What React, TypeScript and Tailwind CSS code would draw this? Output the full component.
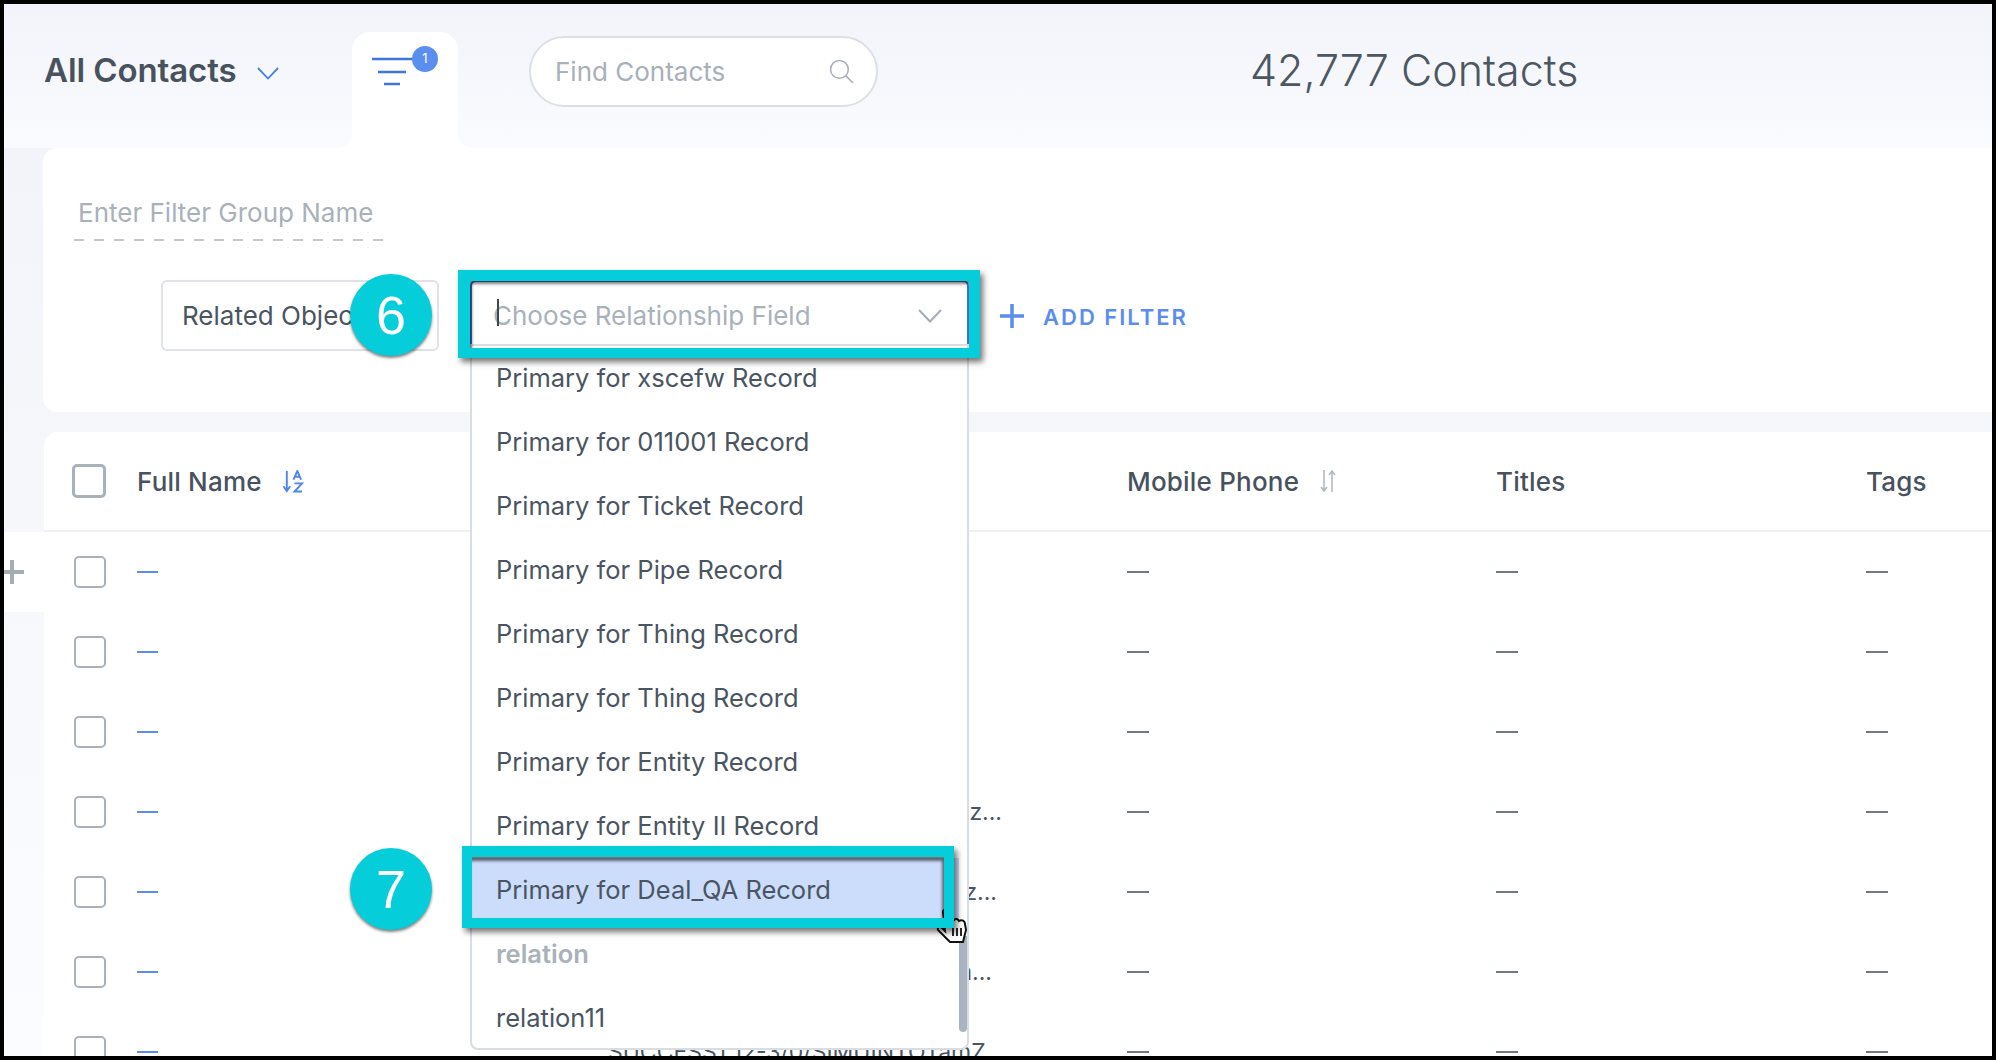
const font = "font-['Inter','Liberation_Sans',sans-serif]";

const menuItems = [
  "Primary for xscefw Record",
  "Primary for 011001 Record",
  "Primary for Ticket Record",
  "Primary for Pipe Record",
  "Primary for Thing Record",
  "Primary for Thing Record",
  "Primary for Entity Record",
  "Primary for Entity II Record",
  "Primary for Deal_QA Record",
];

const rows = [
  { text: "", cls: "" },
  { text: "", cls: "" },
  { text: "", cls: "" },
  { text: "z...", cls: "text-right pr-[125px]" },
  { text: "z...", cls: "text-right pr-[130px]" },
  { text: "n...", cls: "text-right pr-[135px]" },
  { text: "SUCCESS1 12-3/0/SIMUINTOTamZ", cls: "pl-[3px]" },
];

const columns = "grid grid-cols-[65px_468px_522px_369px_370px_1fr] items-center pl-[28px]";

const Chevron = ({ className }: { className: string }) => (
  <svg viewBox="0 0 24 14" fill="none" stroke="currentColor" strokeWidth="2" className={className}>
    <path d="M1 1l11 11.5L23 1" />
  </svg>
);

const Check = ({ header }: { header?: boolean }) => (
  <div
    className={
      header
        ? "w-[34px] h-[34px] rounded-[5px] border-[3px] border-[#a9b1bb] bg-white"
        : "w-[32px] h-[32px] ml-[2px] rounded-[5px] border-2 border-[#a9b1bb] bg-white"
    }
  />
);

const Row = ({ text, cls, first }: { text: string; cls: string; first: boolean }) => (
  <div className={`flex h-[80px] shrink-0 items-center ${first ? "bg-white" : ""}`}>
    <div className="w-[40px] h-full flex items-center text-[#a4acb6]">
      {first && (
        <svg viewBox="0 0 20 24" className="w-[20px] h-[24px]">
          <path d="M0 12h20M8 0v24" stroke="currentColor" strokeWidth="4" />
        </svg>
      )}
    </div>
    <div className={`flex-1 h-full bg-white ${columns}`}>
      <Check />
      <div className="w-[21px] h-[2px] bg-[#5b8def]" />
      <div className={`whitespace-nowrap text-[23px] text-[#4a5562] ${cls}`}>{text}</div>
      <div className="w-[22px] h-[2px] bg-[#6f7883]" />
      <div className="w-[22px] h-[2px] bg-[#6f7883]" />
      <div className="w-[22px] h-[2px] bg-[#6f7883]" />
    </div>
  </div>
);

const App = () => {
  return (
    <div
      className={`${font} relative w-[1996px] h-[1060px] overflow-hidden border-4 border-black bg-gradient-to-b from-[#f1f3f8] to-[#fbfcff]`}
    >
      <div className="flex h-[144px] bg-white">
        <div className="w-[348px] h-full pt-[31px] rounded-br-[14px] bg-gradient-to-b from-[#f2f4f9] to-[#fafbff]">
          <div className="flex items-center pl-[40px] h-[72px]">
            <span className="text-[33px] font-semibold text-[#48525f] tracking-[-0.1px]">All Contacts</span>
            <Chevron className="w-[22px] h-[13px] ml-[21px] mt-[4px] text-[#4a7fe6]" />
          </div>
        </div>
        <div className="w-[106px] h-full bg-gradient-to-b from-[#f2f4f9] to-[#fafbff]">
          <div className="relative mt-[28px] h-[116px] bg-white rounded-t-[18px]">
            <svg viewBox="0 0 46 32" className="absolute left-[20px] top-[25px] w-[46px] h-[32px]">
              <path d="M0 2h42M6 15h28M12 27h16" stroke="#4076db" strokeWidth="2.5" />
            </svg>
            <div className="absolute left-[60px] top-[14px] w-[26px] h-[26px] rounded-full bg-[#5a8ff0] text-white text-[13px] flex items-center justify-center">
              1
            </div>
          </div>
        </div>
        <div className="flex-1 h-full rounded-bl-[14px] bg-gradient-to-b from-[#f2f4f9] to-[#fafbff] flex items-start">
          <div className="ml-[71px] mt-[32px] w-[349px] h-[71px] rounded-full border-2 border-[#dcdfe6] bg-white flex items-center justify-between pl-[24px] pr-[22px]">
            <span className="text-[26px] text-[#a8b0ba]">Find Contacts</span>
            <svg viewBox="0 0 24 24" fill="none" stroke="#a8b0ba" strokeWidth="1.5" className="w-[25px] h-[25px]">
              <circle cx="10" cy="10" r="8.5" />
              <path d="M16 16l7 7" />
            </svg>
          </div>
          <div className="ml-[372px] mt-[38px] text-[43px] font-light text-[#4d5763] leading-[56px]">42,777 Contacts</div>
        </div>
      </div>

      <div className="ml-[39px] h-[264px] bg-white rounded-l-[14px]">
        <div className="pl-[35px] pt-[47px] text-[26px] leading-[36px] text-[#a9b1bb]">Enter Filter Group Name</div>
        <div className="ml-[31px] mt-[8px] w-[309px] h-[2px] bg-[repeating-linear-gradient(90deg,#c2c7ce_0,#c2c7ce_10px,transparent_10px,transparent_19.93px)]" />
        <div className="flex items-center ml-[118px] mt-[39px]">
          <div className="w-[278px] h-[71px] rounded-[6px] border-2 border-[#dfe2e8] flex items-center pl-[19px] text-[26px] text-[#4a5562] overflow-hidden whitespace-nowrap">
            Related Object
          </div>
          <div className="ml-[31px] w-[499px] h-[71px] rounded-t-[6px] border-2 border-[#3f6fd1] bg-white flex items-center justify-between pl-[21px] pr-[24px]">
            <span className="text-[26px] text-[#a9b1bb] relative">
              <span className="absolute left-[4px] top-[3px] w-[2px] h-[27px] bg-[#3d4752]" />
              Choose Relationship Field
            </span>
            <Chevron className="w-[26px] h-[14px] text-[#a4acb6]" />
          </div>
          <svg viewBox="0 0 24 24" className="ml-[31px] w-[24px] h-[24px]">
            <path d="M0 12h24M12 0v24" stroke="#5b8def" strokeWidth="3.5" />
          </svg>
          <span className="ml-[19px] mt-[3px] text-[22px] font-semibold text-[#5b8def] tracking-[2px]">ADD FILTER</span>
        </div>
      </div>

      <div className="mt-[20px] flex flex-col">
        <div className={`ml-[40px] h-[100px] bg-white rounded-tl-[14px] border-b-2 border-[#eef0f3] ${columns} text-[26px] font-medium tracking-[0.2px] text-[#48525f]`}>
          <Check header />
          <div className="flex items-center">
            <span>Full Name</span>
            <svg viewBox="0 0 22 24" className="ml-[21px] w-[21px] h-[23px]">
              <path d="M4 1v20M0.5 17l3.5 5 3.5-5" fill="none" stroke="#4f86ea" strokeWidth="2" />
              <path d="M11 10l4-9 4 9M12.5 7h5M12 14h8l-8 8.5h8" fill="none" stroke="#4f86ea" strokeWidth="2" />
            </svg>
          </div>
          <div />
          <div className="flex items-center">
            <span>Mobile Phone</span>
            <svg viewBox="0 0 16 24" className="ml-[21px] w-[16px] h-[24px]">
              <path d="M4 1v21M1 18l3 4 3-4M12 23V2M9 6l3-4 3 4" fill="none" stroke="#b0b7c0" strokeWidth="1.5" />
            </svg>
          </div>
          <div>Titles</div>
          <div>Tags</div>
        </div>
        {rows.map((r, i) => (
          <Row key={i} text={r.text} cls={r.cls} first={i === 0} />
        ))}
      </div>

      {/* dropdown menu */}
      <div className="absolute left-[466px] top-[340px] w-[499px] h-[706px] bg-white border-2 border-[#d8dce3] rounded-b-[8px] overflow-hidden">
        <div className="flex flex-col">
          {menuItems.map((item, i) => (
            <div
              key={i}
              className={`h-[64px] flex items-center pl-[24px] text-[25.5px] text-[#4a5562] ${i === 8 ? "bg-[#ccdcfb] mr-[8px]" : ""}`}
            >
              {item}
            </div>
          ))}
          <div className="h-[64px] flex items-center pl-[24px] text-[25.5px] font-semibold text-[#a9b1bb]">relation</div>
          <div className="h-[64px] flex items-center pl-[24px] text-[25.5px] text-[#4a5562]">relation11</div>
        </div>
        <div className="absolute right-0 top-[590px] bottom-[16px] w-[8px] rounded-b-full bg-[#aab4c0]" />
      </div>

      {/* hand cursor, sits under the callout box */}
      <svg viewBox="0 0 34 38" className="absolute left-[932px] top-[904px] w-[34px] h-[38px]">
        <path
          d="M7 4c0-3 5-3 5 0l1 8c2-2 4-1 5 0 2-2 4-1 5 1 3-2 6 0 6 3l1 6-3 12H14L2 22c-1-3 2-4 4-2l3 3z"
          fill="#fff"
          stroke="#111"
          strokeWidth="2"
        />
        <path d="M17 20v8M21 20v8M25 20v8" stroke="#111" strokeWidth="1.8" />
      </svg>

      {/* tutorial callouts */}
      <div className="absolute left-[454px] top-[266px] w-[522px] h-[88px] border-t-[11px] border-b-[10px] border-l-[12px] border-r-[11px] border-[#05cdd9] shadow-[3px_4px_6px_rgba(0,0,0,0.55),inset_2px_3px_3px_rgba(0,0,0,0.5)]" />
      <div className="absolute left-[458px] top-[842px] w-[492px] h-[82px] border-t-[11px] border-b-[10px] border-l-[10px] border-r-[10px] border-[#05cdd9] shadow-[3px_4px_6px_rgba(0,0,0,0.55),inset_-2px_4px_3px_rgba(0,0,0,0.55)]" />
      <div className="absolute left-[346px] top-[270px] w-[82px] h-[82px] rounded-full bg-[#05cdd9] shadow-[0_2px_3px_rgba(0,0,0,0.5)] text-white text-[54px] flex items-center justify-center font-['Liberation_Sans',sans-serif]">
        6
      </div>
      <div className="absolute left-[346px] top-[844px] w-[82px] h-[82px] rounded-full bg-[#05cdd9] shadow-[0_2px_3px_rgba(0,0,0,0.5)] text-white text-[54px] flex items-center justify-center font-['Liberation_Sans',sans-serif]">
        7
      </div>
    </div>
  );
};

export default App;
